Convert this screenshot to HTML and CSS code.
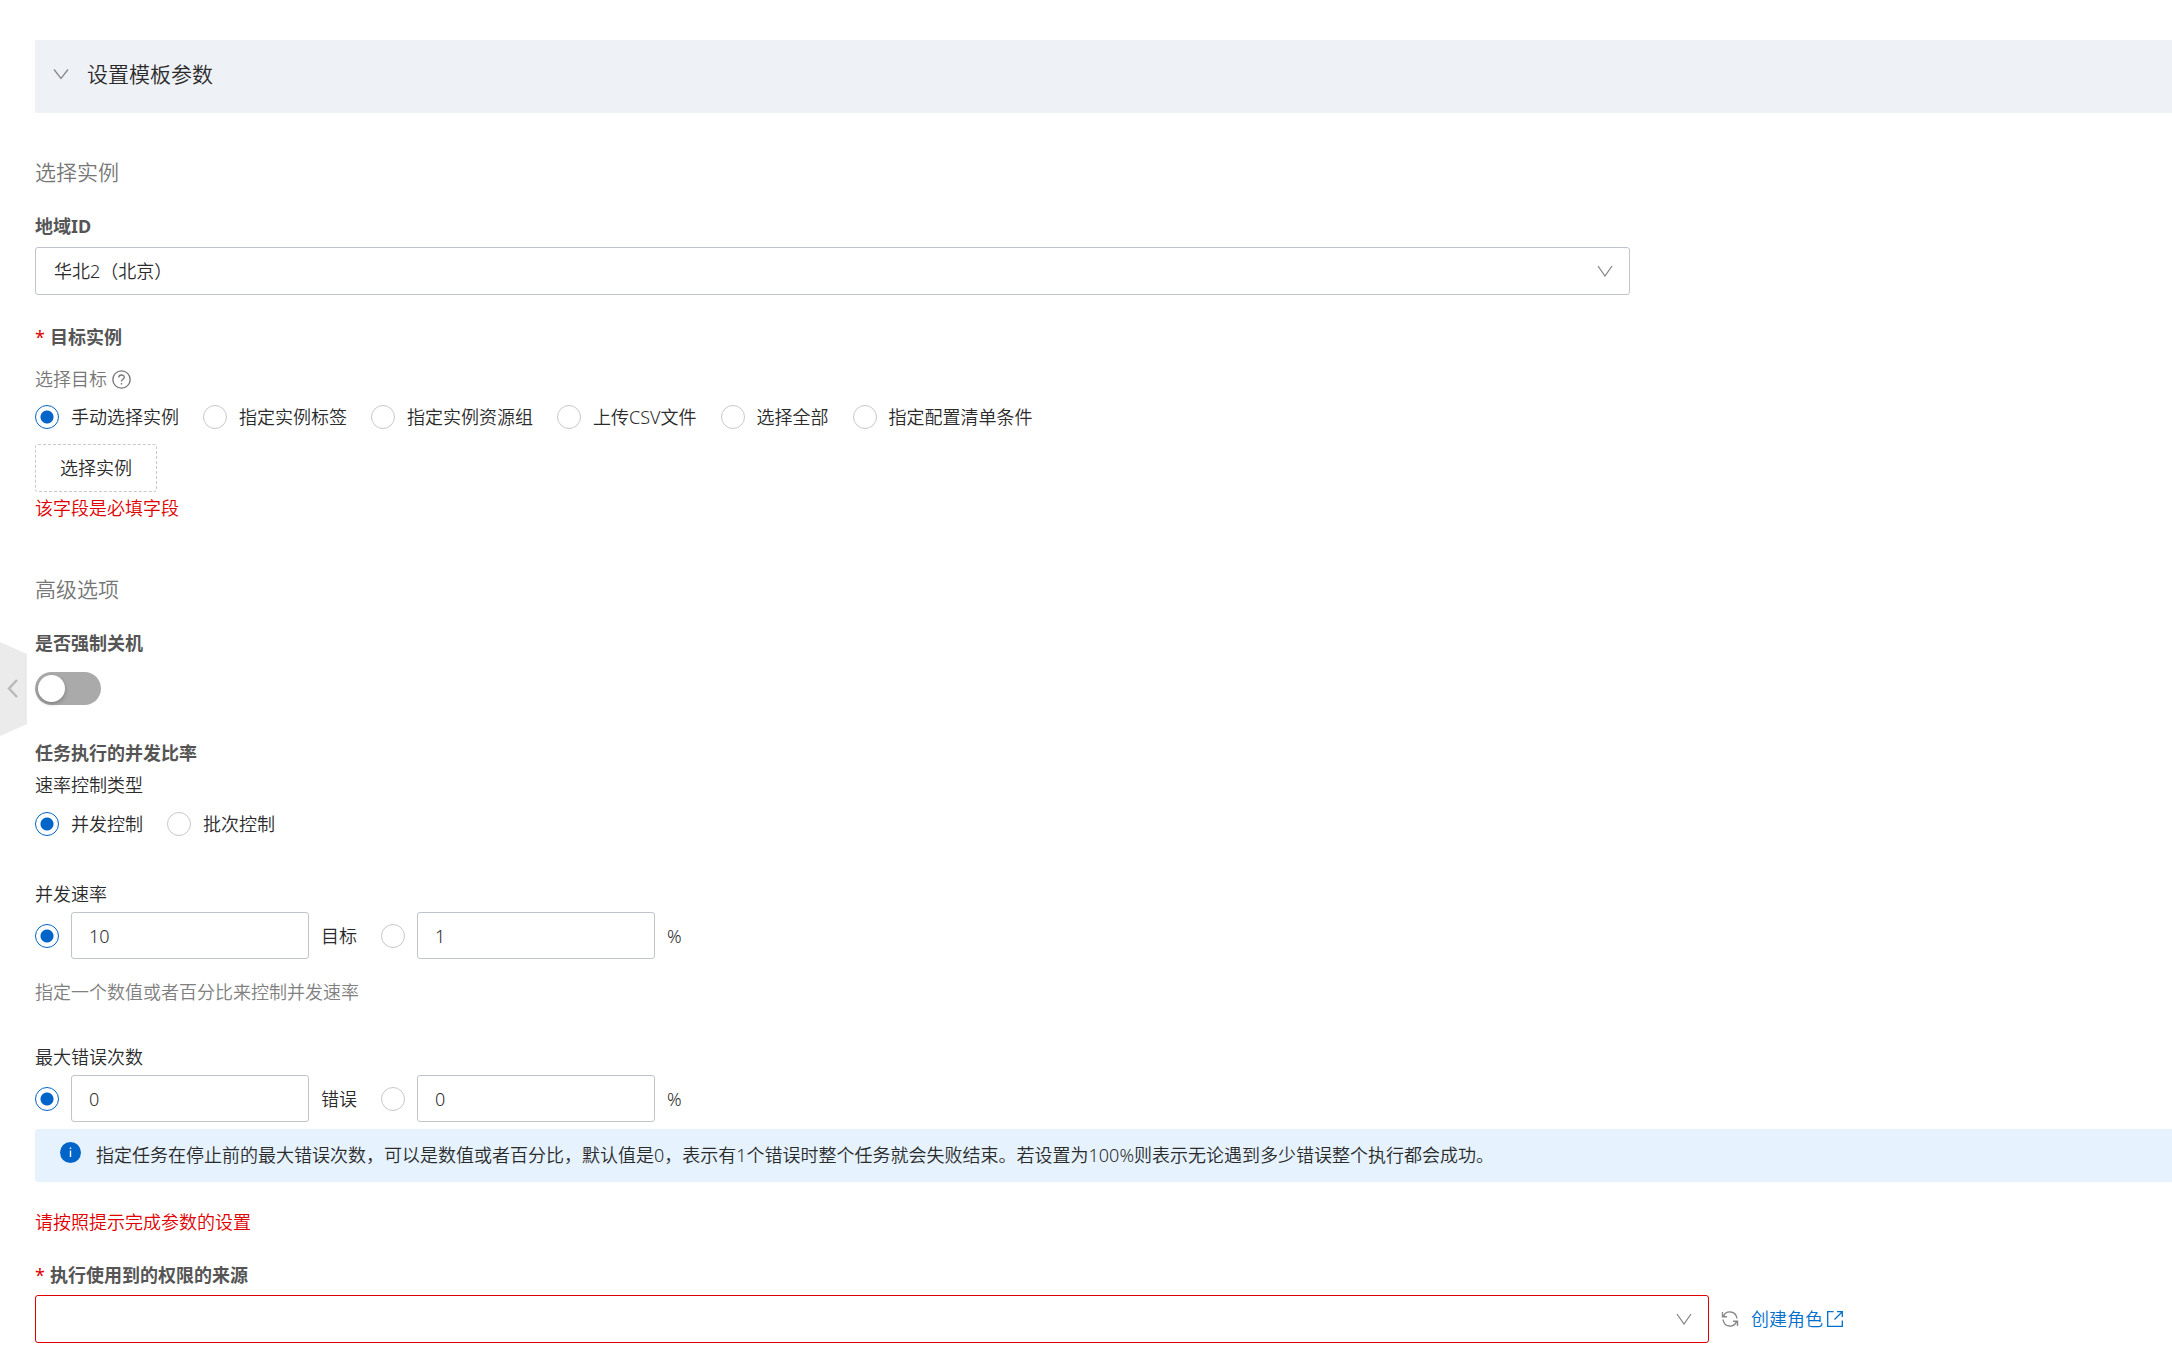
FILE: index.html
```html
<!DOCTYPE html>
<html lang="zh-CN">

<head>
  <meta charset="UTF-8" />
  <meta name="viewport" content="width=device-width, initial-scale=1.0" />
  <title>设置模板参数</title>
  <link rel="stylesheet" href="styles.css">
</head>

<body>
  <button class="side-handle" type="button" aria-label="收起">
    <svg width="27" height="94" viewBox="0 0 27 94">
      <path d="M0 0L27 12V82L0 94Z" fill="#ebebeb" />
      <path d="M17 38L9 46.5L17 55" fill="none" stroke="#b8b8b8" stroke-width="2.4" />
    </svg>
  </button>

  <main class="page">
    <button class="collapse-header" type="button" aria-expanded="true">
      <svg class="chevron" width="16" height="12" viewBox="0 0 16 12">
        <path d="M1 1.5L8 10.5L15 1.5" />
      </svg>
      <span>设置模板参数</span>
    </button>

    <form>
      <section class="section">
        <h2 class="section-title">选择实例</h2>

        <label class="field-label" for="region">地域ID</label>
        <div class="select-box region-select">
          <select id="region">
            <option>华北2（北京）</option>
          </select>
          <svg class="chevron" width="16" height="12" viewBox="0 0 16 12">
            <path d="M1 1L8 11L15 1" />
          </svg>
        </div>

        <h3 class="field-label target-label"><span class="required">*</span>目标实例</h3>
        <p class="sub-label">选择目标
          <svg width="19" height="19" viewBox="0 0 18 18" fill="none" stroke="#777" stroke-width="1.3">
            <circle cx="9" cy="9" r="8.2" />
            <path d="M6.4 7.2C6.4 3.9 11.6 3.9 11.6 7C11.6 8.8 9 8.8 9 10.8" />
            <path d="M9 12.3V13.8" />
          </svg>
        </p>
        <div class="radio-row">
          <label class="radio"><input type="radio" name="target" checked>手动选择实例</label>
          <label class="radio"><input type="radio" name="target">指定实例标签</label>
          <label class="radio"><input type="radio" name="target">指定实例资源组</label>
          <label class="radio"><input type="radio" name="target">上传CSV文件</label>
          <label class="radio"><input type="radio" name="target">选择全部</label>
          <label class="radio"><input type="radio" name="target">指定配置清单条件</label>
        </div>
        <button class="pick-button" type="button">选择实例</button>
        <p class="error field-error">该字段是必填字段</p>
      </section>

      <section class="section advanced">
        <h2 class="section-title">高级选项</h2>

        <label class="field-label" for="force-stop">是否强制关机</label>
        <input class="switch" id="force-stop" type="checkbox" role="switch">

        <h3 class="field-label rate-label">任务执行的并发比率</h3>
        <p class="rate-type">速率控制类型</p>
        <div class="radio-row rate-radios">
          <label class="radio"><input type="radio" name="rate-type" checked>并发控制</label>
          <label class="radio"><input type="radio" name="rate-type">批次控制</label>
        </div>

        <p class="number-label concurrency">并发速率</p>
        <div class="number-row">
          <input type="radio" name="concurrency" aria-label="按目标数" checked>
          <input class="number" id="c-count" type="text" value="10">
          <label class="unit" for="c-count">目标</label>
          <input type="radio" name="concurrency" aria-label="按百分比">
          <input class="number" id="c-percent" type="text" value="1">
          <label for="c-percent">%</label>
        </div>
        <p class="hint">指定一个数值或者百分比来控制并发速率</p>

        <p class="number-label max-errors">最大错误次数</p>
        <div class="number-row">
          <input type="radio" name="max-errors" aria-label="按错误数" checked>
          <input class="number" id="e-count" type="text" value="0">
          <label class="unit" for="e-count">错误</label>
          <input type="radio" name="max-errors" aria-label="按百分比">
          <input class="number" id="e-percent" type="text" value="0">
          <label for="e-percent">%</label>
        </div>
        <div class="notice">
          <svg width="21" height="21" viewBox="0 0 21 21">
            <circle cx="10.5" cy="10.5" r="10.5" fill="#0064c8" />
            <path d="M10.5 8.5V15M10.5 5.5V7" stroke="#fff" stroke-width="1.4" />
          </svg>
          <p>指定任务在停止前的最大错误次数，可以是数值或者百分比，默认值是0，表示有1个错误时整个任务就会失败结束。若设置为100%则表示无论遇到多少错误整个执行都会成功。</p>
        </div>
      </section>

      <p class="error form-error">请按照提示完成参数的设置</p>

      <label class="field-label role-label" for="role"><span class="required">*</span>执行使用到的权限的来源</label>
      <div class="role-row">
        <div class="select-box invalid">
          <select id="role">
            <option></option>
          </select>
          <svg class="chevron" width="16" height="12" viewBox="0 0 16 12">
            <path d="M1 1L8 11L15 1" />
          </svg>
        </div>
        <button class="refresh" type="button" aria-label="刷新">
          <svg width="18" height="18" viewBox="0 0 18 18" fill="none" stroke="#888" stroke-width="1.4">
            <path d="M2.5 6.5C4.8 0 14.8 .2 16 8.5M1.5 2V6.7H6" />
            <path d="M15.5 11.5C13.2 18 3.2 17.8 2 9.5M16.5 16V11.3H12" />
          </svg>
        </button>
        <a class="create-role" href="#">创建角色
          <svg width="18" height="18" viewBox="0 0 18 18" fill="none" stroke="#0070cc" stroke-width="1.3">
            <path d="M7.5 1.7H1.7V16.3H16.3V10.5M11 1.7H16.3V7M16.3 1.7L8.5 9.5" />
          </svg>
        </a>
      </div>
    </form>
  </main>
</body>

</html>
```
FILE: styles.css
```css
* {
  margin: 0;
  padding: 0;
  box-sizing: border-box;
}

body {
  font-family: "Noto Sans", "Noto Sans CJK SC", sans-serif;
  font-size: 18px;
  font-weight: 350;
  line-height: 24px;
  color: #2b2b2b;
  background-color: #fff;
}

button,
input,
select {
  font: inherit;
  color: inherit;
}

button {
  border: none;
  background: none;
  cursor: pointer;
}

svg {
  display: block;
  flex: none;
}

.page {
  padding: 40px 0 16px 35px;
}

.side-handle {
  position: fixed;
  left: 0;
  top: 642px;
}

.chevron path {
  fill: none;
  stroke: #888;
  stroke-width: 1.3;
}

.collapse-header {
  display: flex;
  align-items: center;
  gap: 18px;
  width: 100%;
  padding: 20px 18px 25px;
  font-size: 21px;
  line-height: 28px;
  background-color: #eef1f6;
}

.section {
  margin-top: 45px;
}

.advanced {
  margin-top: 55px;
}

.section-title {
  margin-bottom: 28px;
  font-size: 21px;
  font-weight: inherit;
  line-height: 28px;
  color: #777;
}

.field-label {
  display: block;
  font-size: 18px;
  font-weight: 700;
  color: #555;
}

.required {
  margin-right: 5px;
  font-weight: 400;
  color: #e00000;
}

/* select */
.select-box {
  position: relative;
}

.select-box select {
  display: block;
  width: 100%;
  height: 48px;
  padding: 0 48px 0 18px;
  border: 1px solid #c0c4cc;
  border-radius: 3px;
  background-color: #fff;
  appearance: none;
}

.select-box .chevron {
  position: absolute;
  right: 17px;
  top: 18px;
  pointer-events: none;
}

.select-box.invalid select {
  border-color: #e00000;
}

.region-select {
  width: 74.65%;
  margin-top: 9px;
}

.target-label {
  margin-top: 30px;
}

.sub-label {
  display: flex;
  align-items: center;
  gap: 5px;
  margin-top: 18px;
  color: #777;
}

/* radio */
input[type="radio"] {
  flex: none;
  width: 24px;
  height: 24px;
  border: 1px solid #c8c8c8;
  border-radius: 50%;
  background-color: #fff;
  appearance: none;
}

input[type="radio"]:checked {
  border-color: #0064c8;
  background-image: radial-gradient(circle, #0064c8 6px, transparent 7px);
}

.radio-row {
  display: flex;
  flex-wrap: wrap;
  gap: 24px;
  margin-top: 14px;
}

.radio {
  display: flex;
  align-items: center;
  gap: 12px;
}

.pick-button {
  display: block;
  height: 48px;
  margin-top: 15px;
  padding: 0 24px;
  border: 1px dashed #c8c8c8;
  border-radius: 3px;
}

.error {
  color: #e00000;
}

.field-error {
  margin-top: 4px;
}

/* switch */
.switch {
  display: block;
  width: 66px;
  height: 33px;
  margin-top: 17px;
  padding: 3px;
  border-radius: 17px;
  background-color: #aaa;
  appearance: none;
}

.switch::before {
  content: "";
  display: block;
  width: 27px;
  height: 27px;
  border-radius: 50%;
  background-color: #fff;
  box-shadow: 0 2px 4px rgba(0, 0, 0, 0.25);
}

.switch:checked {
  background-color: #0064c8;
}

.switch:checked::before {
  margin-left: auto;
}

.rate-label {
  margin-top: 36px;
}

.rate-type {
  margin-top: 8px;
}

.rate-radios {
  margin-top: 15px;
}

/* number fields */
.number-label {
  margin-bottom: 6px;
}

.concurrency {
  margin-top: 46px;
}

.max-errors {
  margin-top: 41px;
}

.number-row {
  display: flex;
  align-items: center;
  gap: 12px;
}

.number {
  width: 238px;
  height: 47px;
  padding: 0 17px;
  border: 1px solid #c0c4cc;
  border-radius: 3px;
}

.unit {
  margin-right: 12px;
}

.hint {
  margin-top: 21px;
  color: #808080;
}

.notice {
  display: flex;
  gap: 15px;
  margin-top: 7px;
  padding: 13px 25px 14px;
  border-radius: 3px 0 0 3px;
  line-height: 26px;
  background-color: #e6f3ff;
}

.form-error {
  margin-top: 28px;
}

.role-label {
  margin: 29px 0 8px;
}

.role-row {
  display: flex;
  align-items: center;
  width: 84.65%;
}

.role-row .select-box {
  flex: 1;
}

.refresh {
  margin: 0 12px;
}

.create-role {
  display: flex;
  align-items: center;
  gap: 3px;
  color: #0070cc;
  text-decoration: none;
}
```
